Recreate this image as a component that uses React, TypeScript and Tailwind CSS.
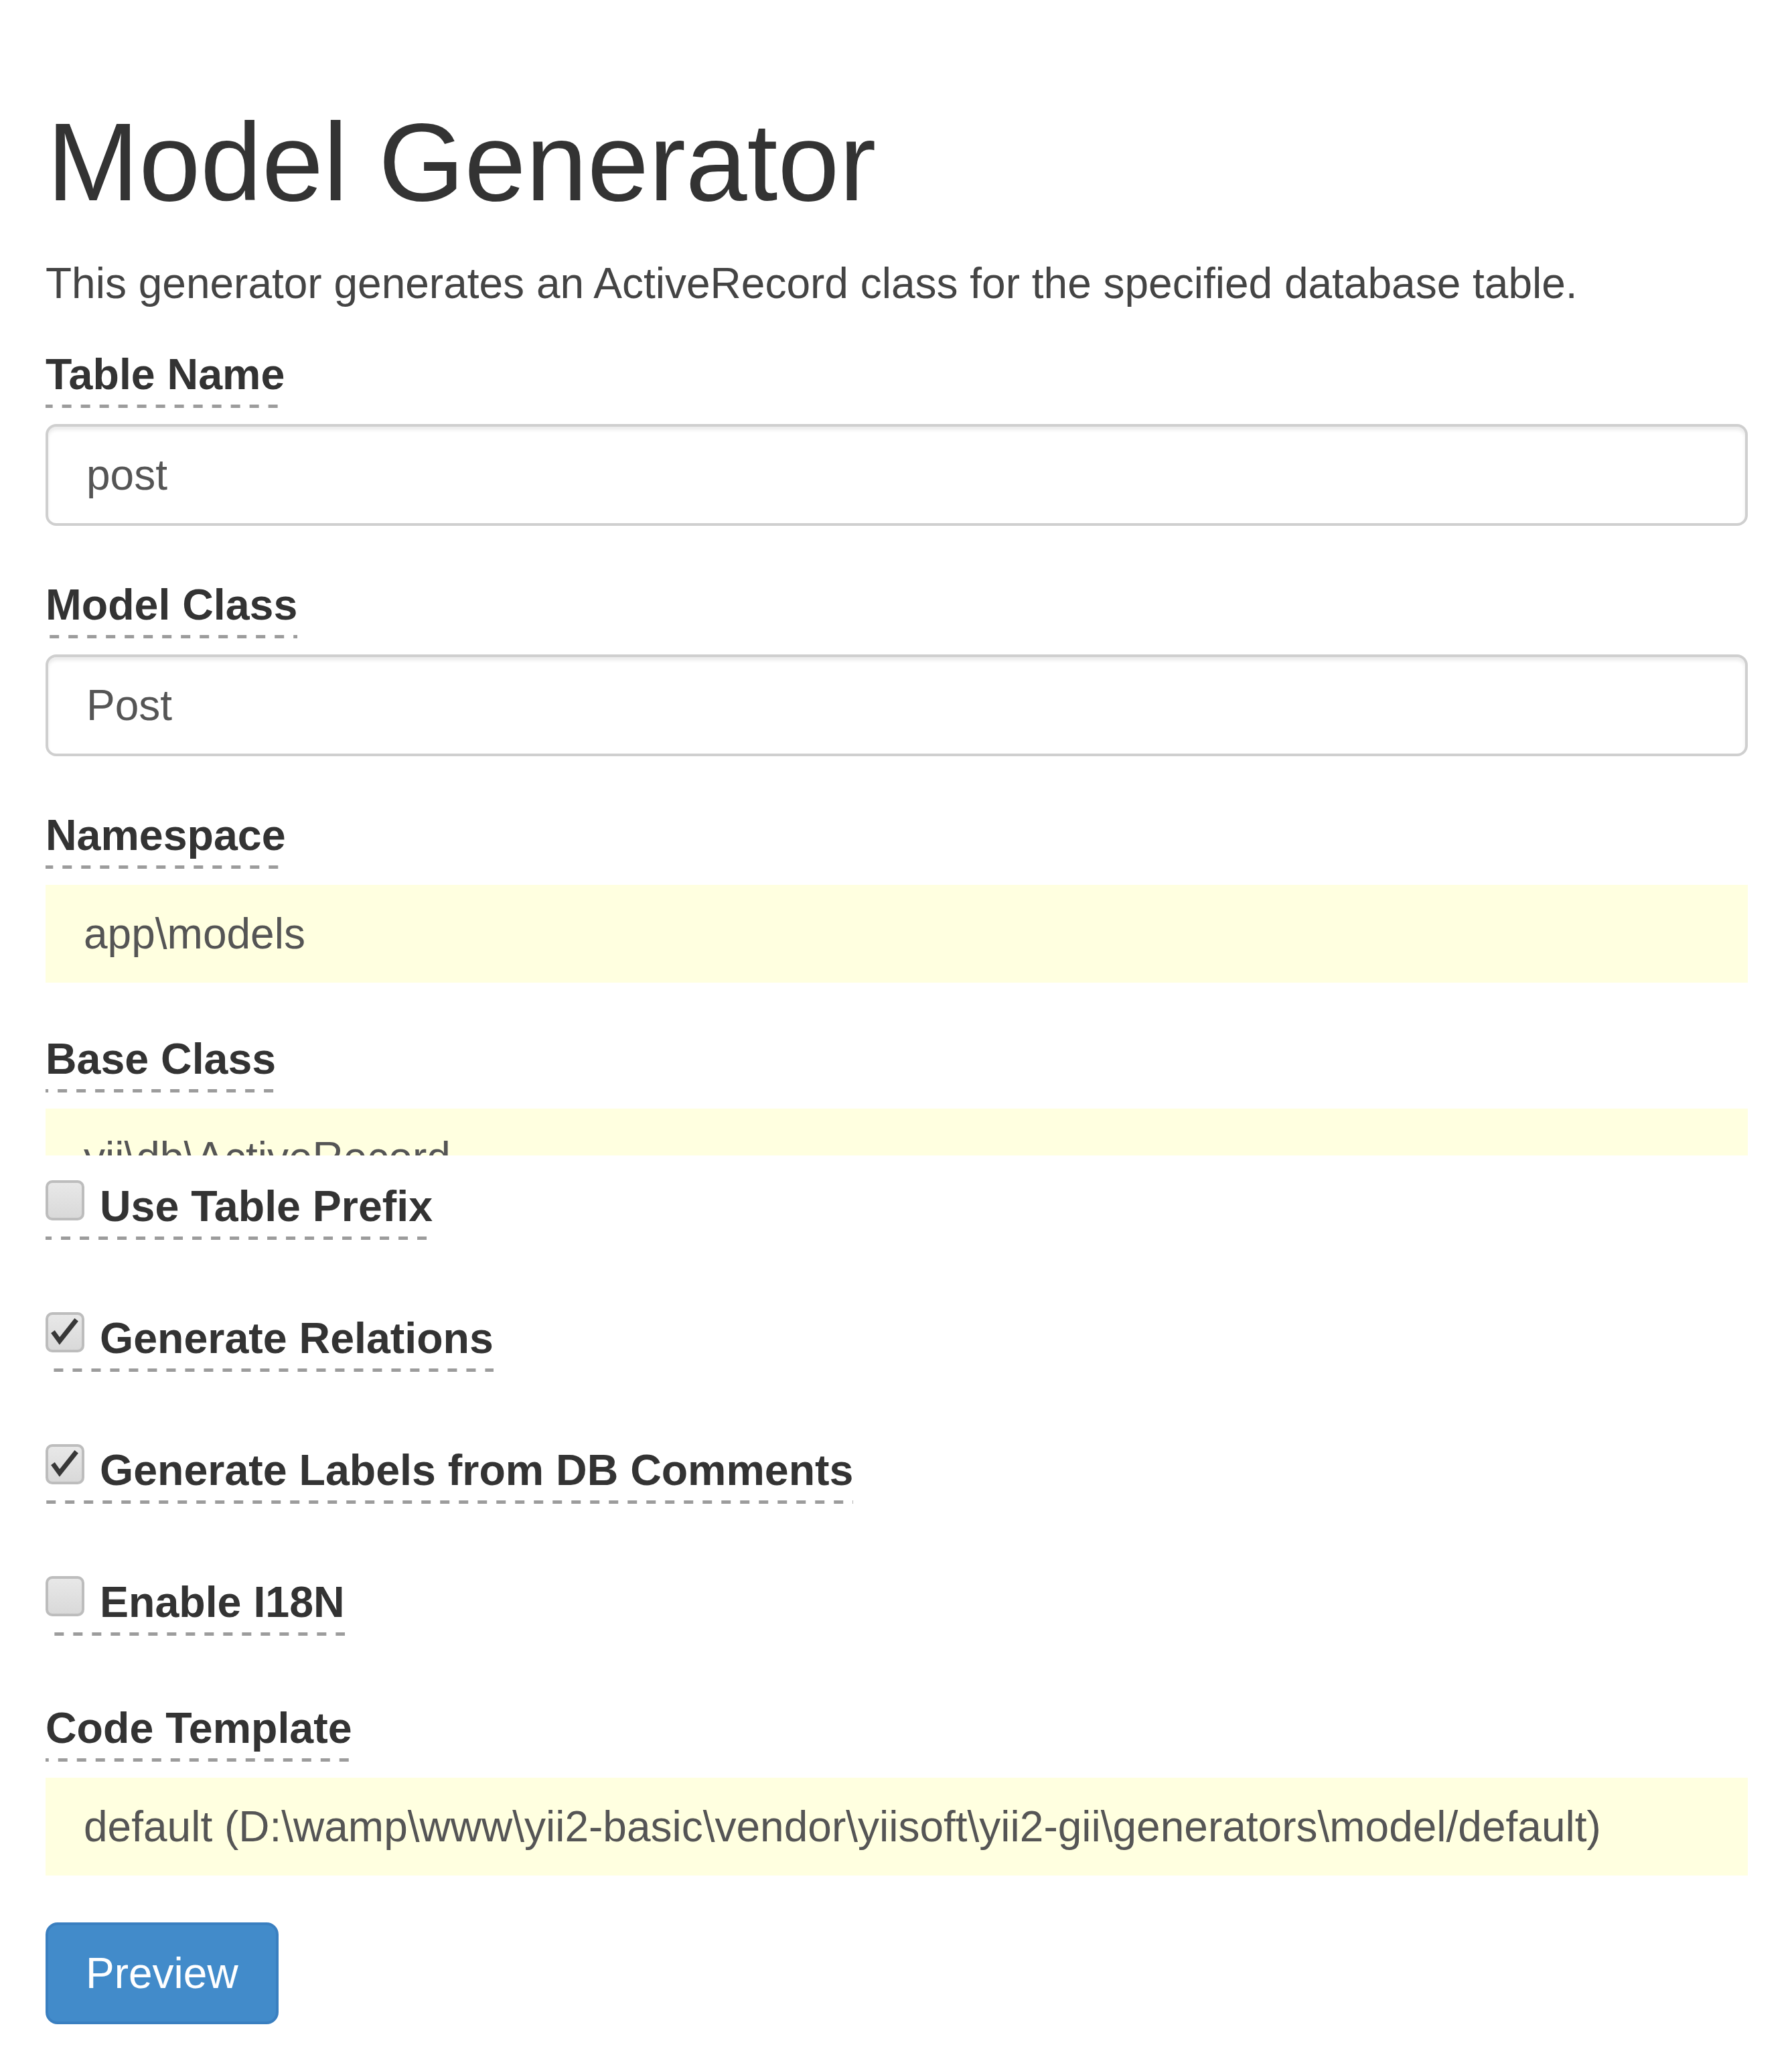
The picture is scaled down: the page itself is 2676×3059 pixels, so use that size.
import React from "react";

const dash =
  "bg-[linear-gradient(to_right,#9c9c9c_50%,transparent_50%)] bg-[length:28px_5px] bg-repeat-x bg-bottom";

function FieldLabel({ text }: { text: string }) {
  return (
    <div className={`inline-block pb-[14px] ${dash}`}>
      <span className="block text-[64.5px] leading-[72px] font-bold text-[#333]">
        {text}
      </span>
    </div>
  );
}

function TextInput({ value }: { value: string }) {
  return (
    <div className="mt-[24px] h-[152px] flex items-center rounded-[16px] border-[4px] border-[#cfcfcf] bg-white pl-[57px] shadow-[inset_0_5px_5px_rgba(0,0,0,0.08)]">
      <span className="text-[64px] text-[#555]">{value}</span>
    </div>
  );
}

function StickyInput({ value, className = "" }: { value: string; className?: string }) {
  return (
    <div className={`mt-[24px] bg-[#ffffe0] overflow-hidden ${className}`}>
      <div className="h-[146px] flex items-center pl-[57px]">
        <span className="text-[64px] text-[#555] whitespace-nowrap">{value}</span>
      </div>
    </div>
  );
}

function CheckRow({
  text,
  checked,
  className = "",
}: {
  text: string;
  checked: boolean;
  className?: string;
}) {
  return (
    <div className={className}>
      <div className={`inline-flex items-start pb-[14px] ${dash}`}>
        <span className="relative -mt-[3px] mr-[23px] h-[60px] w-[58px] shrink-0 rounded-[10px] border-[4px] border-[#bdbdbd] bg-[linear-gradient(#e8e8e8,#d9d9d9)]">
          {checked && (
            <svg
              viewBox="0 0 58 60"
              className="absolute -left-[4px] -top-[4px] h-[60px] w-[58px]"
            >
              <path
                d="M13 32 L21 43 L44 14"
                fill="none"
                stroke="#383838"
                strokeWidth="7"
                strokeLinecap="square"
                strokeLinejoin="miter"
              />
            </svg>
          )}
        </span>
        <span className="block text-[64.5px] leading-[72px] font-bold text-[#333]">
          {text}
        </span>
      </div>
    </div>
  );
}

export default function App() {
  return (
    <div className="min-h-screen bg-white font-['Liberation_Sans',Arial,sans-serif]">
      <div className="w-[2610px] pl-[68px] pt-[152px] pb-[40px]">
        <h1 className="ml-[2px] text-[165px] leading-[180px] font-normal text-[#333]">
          Model Generator
        </h1>
        <p className="mt-[51px] text-[64px] leading-[80px] text-[#444]">
          This generator generates an ActiveRecord class for the specified database table.
        </p>

        <div className="mt-[60px]">
          <FieldLabel text="Table Name" />
          <TextInput value="post" />
        </div>

        <div className="mt-[82px]">
          <FieldLabel text="Model Class" />
          <TextInput value="Post" />
        </div>

        <div className="mt-[82px]">
          <FieldLabel text="Namespace" />
          <StickyInput value="app\models" />
        </div>

        <div className="mt-[78px]">
          <FieldLabel text="Base Class" />
          <StickyInput value="yii\db\ActiveRecord" className="h-[70px]" />
        </div>

        <CheckRow text="Use Table Prefix" checked={false} className="mt-[40px]" />
        <CheckRow text="Generate Relations" checked className="mt-[111px]" />
        <CheckRow text="Generate Labels from DB Comments" checked className="mt-[111px]" />
        <CheckRow text="Enable I18N" checked={false} className="mt-[111px]" />

        <div className="mt-[102px]">
          <FieldLabel text="Code Template" />
          <StickyInput value="default (D:\wamp\www\yii2-basic\vendor\yiisoft\yii2-gii\generators\model/default)" />
        </div>

        <button className="mt-[70px] h-[152px] rounded-[18px] border-[4px] border-[#3a7fc0] bg-[#428bca] px-[56px] text-[64px] text-white">
          Preview
        </button>
      </div>
    </div>
  );
}
